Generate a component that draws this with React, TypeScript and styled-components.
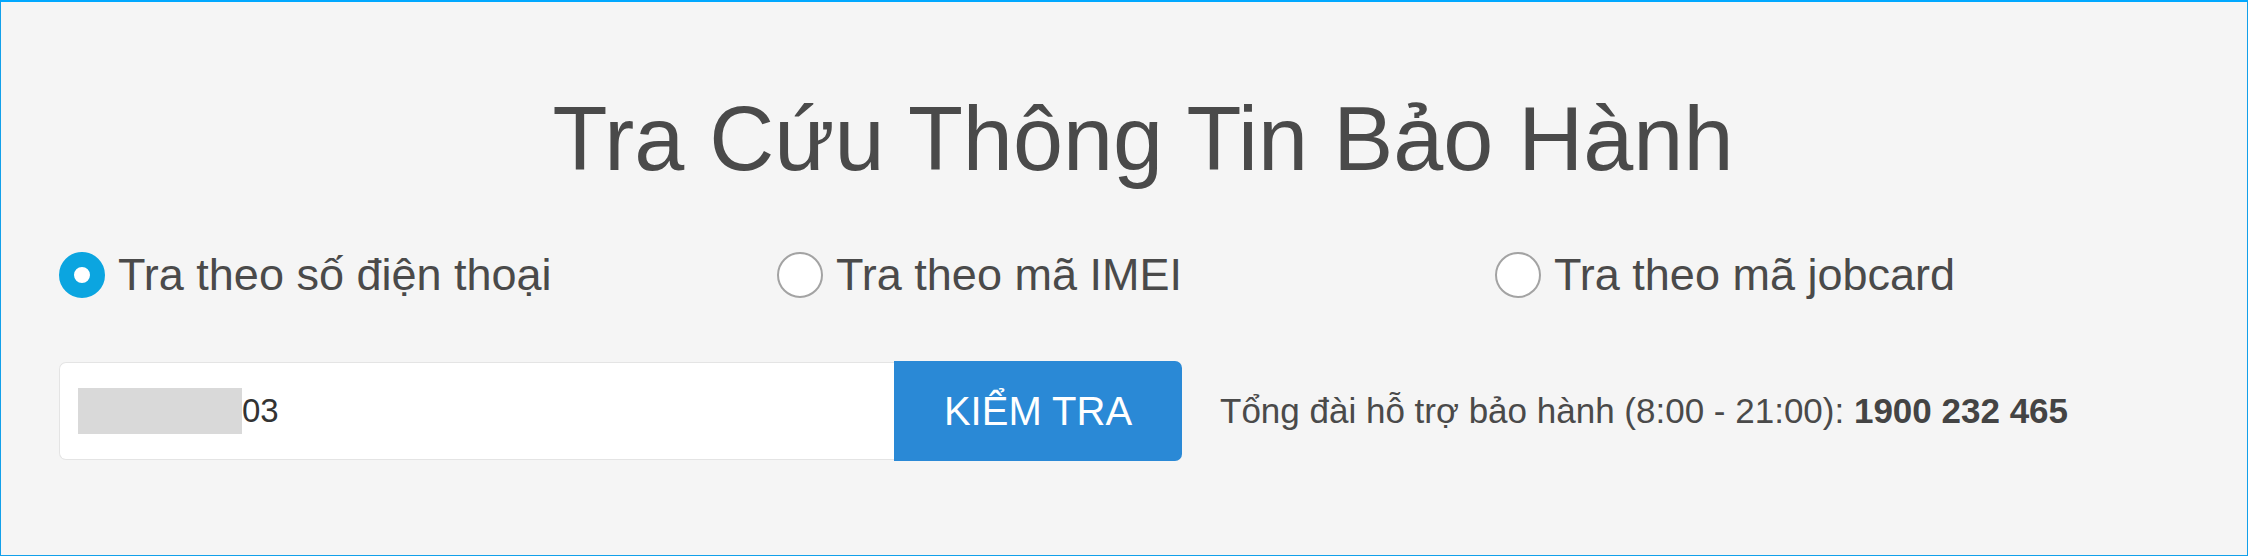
import React, { useState } from 'react';
import styled, { createGlobalStyle } from 'styled-components';

const GlobalStyle = createGlobalStyle`
    html, body {
        margin: 0;
        padding: 0;
        background: #f5f5f5;
    }
    * {
        box-sizing: border-box;
    }
`;

const Page = styled.div`
    width: 2248px;
    height: 556px;
    padding: 92px 20px 0 58px;
    background: #f5f5f5;
    border: 1px solid #12a0ea;
    border-top: 2px solid #00a8ff;
    font-family: "Liberation Sans", Arial, sans-serif;
    color: #4a4a4a;
`;

const Title = styled.h1`
    margin: 0;
    font-size: 90px;
    line-height: 90px;
    font-weight: 400;
    text-align: center;
    color: #4a4a4a;
`;

const RadioGroup = styled.div`
    display: grid;
    grid-template-columns: repeat(3, 718px);
    margin-top: 67px;
`;

const RadioOption = styled.label`
    display: flex;
    align-items: center;
    gap: 13px;
    height: 47px;
    font-size: 45px;
    line-height: 47px;
    cursor: pointer;
`;

const RadioDot = styled.span<{ $checked: boolean }>`
    flex: none;
    width: 46px;
    height: 46px;
    border-radius: 50%;
    background: #fff;
    border: ${(p) => (p.$checked ? '15.5px solid #0ba5e0' : '2px solid #a3a3a3')};
`;

const SearchRow = styled.div`
    display: flex;
    align-items: center;
    margin-top: 63px;
`;

const Field = styled.div`
    display: flex;
    align-items: center;
    width: 835px;
    height: 98px;
    padding-left: 18px;
    background: #fff;
    border: 1px solid #e4e4e4;
    border-right: none;
    border-radius: 7px 0 0 7px;
`;

const Mask = styled.span`
    flex: none;
    width: 164px;
    height: 46px;
    background: #d9d9d9;
`;

const Input = styled.input`
    flex: 1;
    min-width: 0;
    height: 100%;
    padding: 0;
    border: none;
    outline: none;
    background: transparent;
    font-family: "Liberation Sans", Arial, sans-serif;
    font-size: 33px;
    color: #333;
`;

const CheckButton = styled.button`
    width: 288px;
    height: 100px;
    border: none;
    border-radius: 0 7px 7px 0;
    background: #2a89d6;
    color: #fff;
    font-family: "Liberation Sans", Arial, sans-serif;
    font-size: 40px;
    cursor: pointer;
`;

const Hotline = styled.p`
    margin: 0 0 0 38px;
    font-size: 35px;
    color: #4a4a4a;

    strong {
        color: #444;
        font-weight: 700;
    }
`;

const options = [
    { id: 'phone', label: 'Tra theo số điện thoại' },
    { id: 'imei', label: 'Tra theo mã IMEI' },
    { id: 'jobcard', label: 'Tra theo mã jobcard' },
];

export default function App() {
    const [mode, setMode] = useState('phone');
    const [value, setValue] = useState('03');

    return (
        <>
            <GlobalStyle />
            <Page>
                <Title>Tra Cứu Thông Tin Bảo Hành</Title>

                <RadioGroup>
                    {options.map((o) => (
                        <RadioOption key={o.id} onClick={() => setMode(o.id)}>
                            <RadioDot $checked={mode === o.id} />
                            {o.label}
                        </RadioOption>
                    ))}
                </RadioGroup>

                <SearchRow>
                    <Field>
                        <Mask />
                        <Input value={value} onChange={(e) => setValue(e.target.value)} />
                    </Field>
                    <CheckButton>KIỂM TRA</CheckButton>
                    <Hotline>
                        Tổng đài hỗ trợ bảo hành (8:00 - 21:00): <strong>1900 232 465</strong>
                    </Hotline>
                </SearchRow>
            </Page>
        </>
    );
}
